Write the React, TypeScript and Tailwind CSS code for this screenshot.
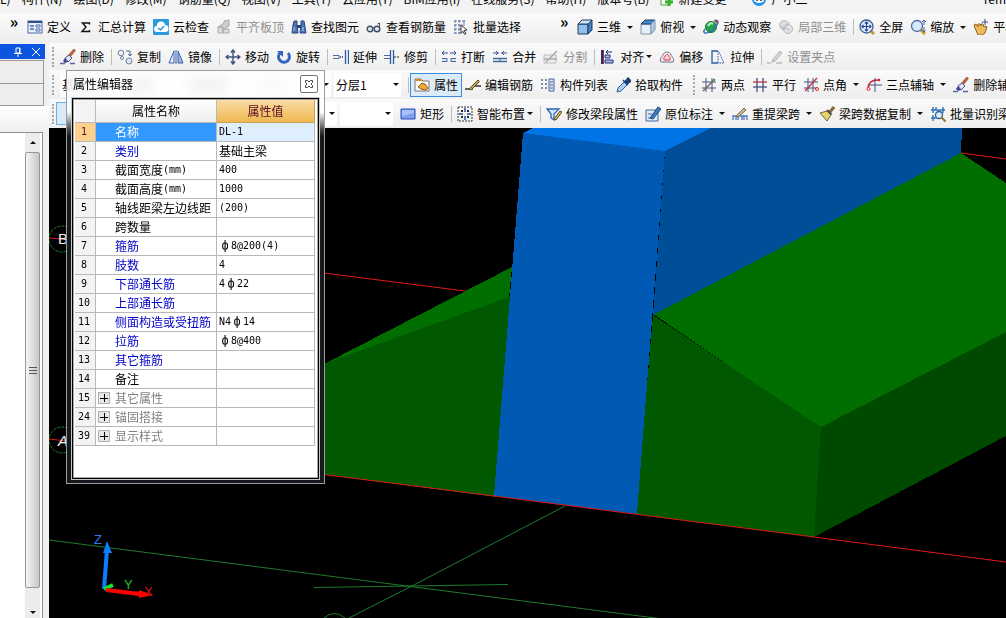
import type { ReactNode } from 'react';

const UI_FONT = "font-['Noto_Sans_CJK_SC',sans-serif]";

const menus = ['(L)', '构件(N)', '绘图(D)', '修改(M)', '钢筋量(Q)', '视图(V)', '工具(T)', '云应用(Y)', 'BIM应用(I)', '在线服务(S)', '帮助(H)', '版本号(B)'];

const magnifier = (
  <>
    <path d="m10 10 5 5" stroke="#c69632" strokeWidth="3" />
    <circle cx="7" cy="7" r="5.5" fill="#d7e8fa" stroke="#4c6a9c" strokeWidth="1.3" />
  </>
);

const icons: Record<string, ReactNode> = {
  define: (
    <>
      <rect x="1" y="2" width="14" height="12" fill="#e9f0fb" stroke="#4a6aa5" />
      <path d="M1 3h14" stroke="#2d4f8f" strokeWidth="2" />
      <path d="M3 7h4M3 10h4" stroke="#4a6aa5" strokeWidth="1.5" />
      <path d="M9 6h4v2H9zM9 10h4v2H9z" fill="#fff" stroke="#4a6aa5" />
    </>
  ),
  sigma: <path d="M11.500 5.500V4H4.500L8 8l-4 4.500h7.500V11" stroke="#111" strokeWidth="1.400" fill="none" />,
  cloud: (
    <>
      <rect width="16" height="16" rx="1" fill="#2b9be0" />
      <path d="M4 13a3 3 0 0 1 0-6 4 4 0 0 1 8-1 3.500 3.500 0 0 1 0 7z" fill="#fff" />
      <path d="m5 9 2.500 2L11 7" stroke="#2b9be0" strokeWidth="1.500" fill="none" />
    </>
  ),
  slab: (
    <>
      <path d="M2 8h5v6H2zM7 10h6v4H7z" fill="#dcdcdc" stroke="#aaa" />
      <path d="m2 8 6-4V2l5-1v6l-3 1v2H7V8z" fill="#cfcfcf" stroke="#aaa" />
    </>
  ),
  binoculars: (
    <>
      <path d="M3 2h3v4l1 8H1l1-8zM10 2h3l2 12H9l1-8z" fill="#4f74b8" stroke="#28447d" />
      <path d="M6 6h4v3H6z" fill="#28447d" />
      <path d="M3 8v4M12 8v4" stroke="#b9d0f2" />
    </>
  ),
  glasses: (
    <>
      <circle cx="4" cy="10" r="2.8" fill="#dde7f5" stroke="#444e60" strokeWidth="1.4" />
      <circle cx="11" cy="10" r="2.8" fill="#dde7f5" stroke="#444e60" strokeWidth="1.4" />
      <path d="M6.500 9q1-1 2 0M13.500 9V4l-2 1" stroke="#444e60" fill="none" />
    </>
  ),
  batch: (
    <>
      <path d="M2 1v14M6 1v14M1 2h12M1 6h9M1 10h7M1 14h7" stroke="#6478ac" strokeDasharray="3 1" />
      <path d="M11 1v6" stroke="#6478ac" />
      <path d="m8 6 6 5-3 .5 2 3-1.500.8-1.500-3-2 2z" fill="#fff" stroke="#333" />
    </>
  ),
  cube: (
    <>
      <path d="M1 5h10v10H1z" fill="#8fc0ea" stroke="#1f3b5c" />
      <path d="m1 5 4-4h10l-4 4z" fill="#d1e8fb" stroke="#1f3b5c" />
      <path d="m11 5 4-4v10l-4 4z" fill="#3f82bd" stroke="#1f3b5c" />
    </>
  ),
  topCube: (
    <>
      <path d="M1 5h10v10H1z" fill="#e7effa" stroke="#7f93ad" />
      <path d="m1 5 4-4h10l-4 4z" fill="#3a8dd2" stroke="#1f3b5c" />
      <path d="m11 5 4-4v10l-4 4z" fill="#b5cbe5" stroke="#7f93ad" />
    </>
  ),
  orbit: (
    <>
      <circle cx="8" cy="8" r="5.5" fill="#25a244" stroke="#137a2d" />
      <path d="M5 7q2-4 5-2" stroke="#b6f1c0" strokeWidth="2" fill="none" />
      <path d="M2 14c3 1 12-6 13-11 0-2-2-2-4-1M2 14c-2-1-1-3 0-4" stroke="#2f6ec0" strokeWidth="1.500" fill="none" />
      <circle cx="13.5" cy="2.500" r="1.500" fill="#c4402f" />
    </>
  ),
  localCube: (
    <>
      <circle cx="6" cy="6" r="4.5" fill="#dcdcdc" stroke="#bbb" />
      <circle cx="10" cy="10" r="4.5" fill="#e4e4e4" stroke="#b5b5b5" />
      <path d="M5 12 12 3M3 8l9 3" stroke="#bbb" />
    </>
  ),
  fullscreen: (
    <>
      {magnifier}
      <circle cx="7.5" cy="7.5" r="6.5" fill="#dce8fa" stroke="#3e5c94" strokeWidth="1.3" />
      <path d="M7.500 3v9M3 7.500h9M6 4.500 7.500 3 9 4.500M6 10.500 7.500 12 9 10.500M4.500 6 3 7.500 4.500 9M10.500 6 12 7.500 10.500 9" stroke="#2d4d94" strokeWidth="1.2" fill="none" />
    </>
  ),
  zoom: (
    <>
      {magnifier}
      <path d="M14 1v5M12 3l2-2 2 2M14 8v5M12.500 11.500 14 13l1.500-1.500" stroke="#3f5fa8" fill="none" />
    </>
  ),
  pan: (
    <>
      <path d="M2 9 1 6l2-1 2 3V5h2l1 2V5h2l1 3 2-1 1 1-2 6-3 2H5z" fill="#eeba5e" stroke="#8f6221" />
      <path d="M12 0v6M9 3h6" stroke="#334f8a" />
    </>
  ),
  brush: (
    <>
      <path d="m14 1.500-5 6" stroke="#b4623a" strokeWidth="3" strokeLinecap="round" />
      <path d="m9 6-4 3 3 4 4-4z" fill="#dfe3f6" stroke="#4b5596" />
      <path d="m5 9-2 3 2 2 3-1z" fill="#3d468c" />
      <path d="M0 14.500h5M10 14.500h5" stroke="#5a66a8" strokeWidth="1.500" />
    </>
  ),
  copy: (
    <>
      <circle cx="4" cy="4" r="2.8" fill="#eef3fa" stroke="#6f7f9c" />
      <circle cx="5" cy="9" r="1.5" fill="#fff" stroke="#6f7f9c" />
      <circle cx="12" cy="12" r="3" fill="#dce7f5" stroke="#6f7f9c" />
      <path d="M9 2h4v4M11 5l2 2 2-2" stroke="#596a8b" fill="none" />
    </>
  ),
  mirror: (
    <>
      <path d="M6 2v12H1z" fill="#e8f0fb" stroke="#3a5fa8" />
      <path d="M10 2v12h5z" fill="#9db9e4" stroke="#3a5fa8" />
      <path d="M8 1v14" stroke="#3a5fa8" />
    </>
  ),
  move: <path d="M8 1v14M1 8h14M6 3.500 8 1l2 2.500M6 12.500 8 15l2-2.500M3.500 6 1 8l2.500 2M12.500 6 15 8l-2.500 2" stroke="#3d5580" strokeWidth="1.4" fill="none" />,
  rotate: (
    <>
      <path d="M4.500 3.500A5.500 5.500 0 1 0 12 4" stroke="#3567c0" strokeWidth="3" fill="none" />
      <path d="M1 2h6v6z" fill="#3567c0" />
    </>
  ),
  extend: (
    <>
      <path d="M12.500 1v14M15.500 1v14" stroke="#2d5aa8" strokeWidth="1.3" />
      <path d="M0 6.500h6v3H0" stroke="#4a6aa5" />
      <path d="M7 8h4" stroke="#222" strokeWidth="1.5" strokeDasharray="1 1" />
    </>
  ),
  trim: (
    <>
      <path d="M6.500 1v14M9.500 1v14" stroke="#2d5aa8" strokeWidth="1.3" />
      <path d="M0 6.500h6M0 9.500h6" stroke="#4a6aa5" />
      <path d="M10 8h6" stroke="#222" strokeDasharray="2 1" />
    </>
  ),
  breakLine: (
    <>
      <path d="M1 4h6M9 4h6M3 2 1 4l2 2M13 2l2 2-2 2" stroke="#3b4f9a" fill="none" />
      <path d="M1 9.500h5v3H1M15 9.500h-5v3h5" stroke="#3f6b9a" fill="#dbe7f4" />
    </>
  ),
  merge: (
    <>
      <path d="M1 4h6M9 4h6M4 2l2 2-2 2M12 2l-2 2 2 2" stroke="#3b4f9a" fill="none" />
      <path d="M1 9.500h14M1 12.500h14" stroke="#3f6b9a" strokeWidth="1.3" />
      <path d="M8 9.500v3" stroke="#3f6b9a" />
    </>
  ),
  split: (
    <>
      <path d="M1 6h12v8H1z" fill="#eee" stroke="#bbb" />
      <path d="m3 13 11-11M1 10h13" stroke="#aaa" strokeWidth="1.5" />
    </>
  ),
  align: (
    <>
      <path d="M3.500 1v14" stroke="#c02a2a" />
      <path d="M2 1v14" stroke="#1d2f78" strokeWidth="2" />
      <path d="M5 6h5v3H5zM5 11h8v3H5z" fill="#a9bce8" stroke="#1d2f78" />
      <path d="M6 3h6M8 1 6 3l2 2" stroke="#1d2f78" />
    </>
  ),
  offset: (
    <>
      <path d="M2 13c-2-3 1-5 2-7 1-4 7-4 8 0 1 2 4 4 2 7z" fill="#fbe9e9" stroke="#66708c" />
      <path d="M5 11c-1-2 1-3 1-4 1-2 3-2 4 0 0 1 2 2 1 4z" fill="#f3d3d6" stroke="#c73f50" />
    </>
  ),
  stretch: (
    <>
      <path d="M8 2H2v12h6" stroke="#2d5aa8" strokeWidth="1.3" fill="none" />
      <path d="M8 2v12M9 3l5 11H8" stroke="#2d5aa8" strokeDasharray="1.500 1" fill="none" />
    </>
  ),
  grip: (
    <>
      <path d="m6 10 7-8 2 2-7 8-3 1z" fill="#d8d8d8" stroke="#b0b0b0" />
      <path d="M0 14h4M9 14h6" stroke="#bbb" strokeWidth="1.5" />
    </>
  ),
  property: (
    <>
      <path d="M1 2h6l2 2h6v10H1z" fill="#fff" stroke="#7a7566" />
      <path d="M1 3h7" stroke="#d98e2b" strokeWidth="2" />
      <path d="m4 10 4-4 3 1 3 4-2 2-5-1z" fill="#f0a93e" stroke="#8c5a17" />
    </>
  ),
  editRebar: (
    <>
      <path d="M0 12h8M10 9h6" stroke="#333" strokeWidth="1.3" />
      <path d="m4 12 9-9 1.500 1.500L6 13z" fill="#c8a555" stroke="#5a4a28" />
    </>
  ),
  list: (
    <>
      <path d="M1 3h2M1 7h2M1 11h2M5 3h2M5 7h2M5 11h2" stroke="#5b6c95" strokeWidth="1.5" />
      <path d="M9 2h5v12H9z" fill="#dfe7f6" stroke="#45619c" />
      <path d="M10 5h3M10 8h3M10 11h3" stroke="#45619c" />
    </>
  ),
  picker: (
    <>
      <path d="m2 15 1-4 6-6 3 3-6 6z" fill="#a8d1f2" stroke="#2d5f96" />
      <path d="m8 3 5 5M10 5l3-4 3 3-4 3z" fill="#1d3f78" stroke="#1d3f78" strokeWidth="1.5" />
    </>
  ),
  twoPoint: (
    <>
      <path d="M5 1v14M11 1v14M1 5h14M1 11h14" stroke="#43547c" />
      <path d="M2 14 14 2" stroke="#7c5a5a" strokeWidth="1.2" />
      <path d="M12 2h2v2h-2z" fill="#3a9a3a" />
    </>
  ),
  parallel: (
    <>
      <path d="M5 1v14M11 1v14" stroke="#43547c" strokeWidth="1.3" />
      <path d="M1 5h14" stroke="#c0304a" strokeWidth="1.3" />
      <path d="M1 10h14" stroke="#43547c" strokeWidth="1.3" />
    </>
  ),
  pointAngle: (
    <>
      <path d="M5 1v14M10 1v14M1 5h14M1 11h12" stroke="#43547c" />
      <path d="M2 14 14 1" stroke="#c0304a" strokeWidth="1.3" />
      <circle cx="14" cy="12" r="1.5" fill="none" stroke="#d22" />
    </>
  ),
  threePoint: (
    <>
      <path d="M2 12C2 6 5 3 12 3" stroke="#d0253a" strokeWidth="1.5" fill="none" />
      <path d="M9 1v14M3 8h13" stroke="#43547c" />
      <circle cx="2.5" cy="12" r="1.5" fill="#fff" stroke="#d0253a" />
      <circle cx="13" cy="3" r="1.3" fill="#d0253a" />
    </>
  ),
  rect: (
    <>
      <path d="M1 3h14v10H1z" fill="#7ea2ef" stroke="#2448b8" />
      <path d="M2 4h12v3L2 10z" fill="#a9c1f7" />
    </>
  ),
  smart: (
    <>
      <rect x="1" y="1" width="14" height="14" fill="none" stroke="#333" strokeDasharray="2 1" />
      <path d="M8 2v4M8 10v4M2 8h4M10 8h4" stroke="#2b4f96" strokeWidth="1.5" />
      <path d="M4 4h2v2H4zM10 4h2v2h-2zM4 10h2v2H4zM10 10h2v2h-2z" fill="#223" />
    </>
  ),
  editSpan: (
    <>
      <path d="M1 3h12L8 8v6l-3-2V8z" fill="#cfe3f9" stroke="#2f68b4" strokeWidth="1.3" />
      <path d="m8 13 6-8 2 1-6 8z" fill="#d9b568" stroke="#5b4a23" />
    </>
  ),
  annotate: (
    <>
      <path d="M1 4h12v11H1z" fill="#dce8f8" stroke="#456ba5" />
      <path d="M3 8h4M3 12h3" stroke="#456ba5" />
      <path d="m5 12 8-11 3 2-8 10z" fill="#4277ba" stroke="#234a80" />
    </>
  ),
  respan: (
    <>
      <path d="M1 14v-4h3v4M6 14v-4h4v4M12 14v-4h3v4M1 10h14" stroke="#4b79b8" fill="none" strokeWidth="1.3" />
      <path d="m4 10 8-8 2 2-8 7z" fill="#cabd98" stroke="#776a4c" />
    </>
  ),
  spanCopy: (
    <>
      <path d="m15 1-5 6" stroke="#8b6b38" strokeWidth="3" />
      <path d="m1 7 7-2 4 4-4 6z" fill="#e5d36d" stroke="#6e6638" />
      <path d="m8 4 4.500 4.500" stroke="#3f4f44" strokeWidth="2" />
    </>
  ),
  identify: (
    <>
      <path d="M1 4h14M3 1v6M13 1v6M6 1v3M1 12h6M3 9v6" stroke="#3172b4" strokeWidth="1.4" />
      <circle cx="9" cy="9" r="3.5" fill="#dcecfb" stroke="#2f5e94" strokeWidth="1.3" />
      <path d="m11.500 11.500 4 4" stroke="#a3692a" strokeWidth="2" />
    </>
  ),
};

function Icon({ name }: { name: string }) {
  return (
    <svg viewBox="0 0 16 16" className="h-4 w-4 shrink-0" fill="none" aria-hidden="true">
      {icons[name]}
    </svg>
  );
}

function Caret() {
  return (
    <svg viewBox="0 0 6 3" className="h-[3px] w-[6px]" aria-hidden="true">
      <path d="M0 0h6L3 3z" fill="#111" />
    </svg>
  );
}

type ToolProps = { icon: string; label: string; menu?: boolean; tight?: boolean; disabled?: boolean };

function Tool({ icon, label, menu, tight, disabled }: ToolProps) {
  return (
    <button type="button" disabled={disabled} className={`flex h-5 shrink-0 items-center whitespace-nowrap ${disabled ? 'text-[#8f8f8f]' : 'text-black'}`}>
      <Icon name={icon} />
      <span className="ml-1">{label}</span>
      {menu && (
        <span className={`flex justify-end ${tight ? 'w-2' : 'w-3'}`}>
          <Caret />
        </span>
      )}
    </button>
  );
}

function Separator() {
  return <span className="-mr-0.5 h-4 w-px shrink-0 bg-[#bdbdbd]" />;
}

function Grip() {
  return <span className="-mr-px h-5 w-0.5 shrink-0 border-l-2 border-dotted border-[#a8a8a8]" />;
}

function Combo({ label, value, className }: { label: string; value: string; className: string }) {
  return (
    <label className={`relative flex h-6 shrink-0 items-center bg-white ${className}`}>
      <select aria-label={label} className="h-full w-full appearance-none bg-transparent pl-0.5 text-xs outline-none">
        <option>{value}</option>
      </select>
      <span className="pointer-events-none absolute right-0.5">
        <Caret />
      </span>
    </label>
  );
}

function ToolRow({ children }: { children: ReactNode }) {
  return (
    <div className="flex items-center gap-[7px] overflow-hidden bg-linear-to-b from-[#fafafa] to-[#eeeeee] pl-[3px]">
      {children}
    </div>
  );
}

function MenuBar() {
  return (
    <nav className="-mt-4 flex h-[29px] shrink-0 items-center gap-[11px] overflow-hidden whitespace-nowrap bg-[#f3f3f3]">
      {menus.map((item, i) => (
        <button key={item} type="button" className={i === 0 ? '-ml-1' : ''}>
          {item}
        </button>
      ))}
      <button type="button" className="flex items-center gap-1">
        <svg viewBox="0 0 14 16" className="h-4 w-[14px]" aria-hidden="true">
          <path d="M1 1h9v13H1z" fill="#fff" stroke="#4aa33e" />
          <path d="M9 7v8M5 11h8" stroke="#35b32b" strokeWidth="3" />
        </svg>
        新建变更
        <span className="ml-1">
          <Caret />
        </span>
      </button>
      <button type="button" className="flex items-center gap-1">
        <svg viewBox="0 0 16 16" className="h-4 w-4" aria-hidden="true">
          <circle cx="8" cy="8" r="7" fill="#2292e6" />
          <ellipse cx="8" cy="9" rx="5" ry="3" fill="#fff" />
          <circle cx="6" cy="9" r="1" fill="#123" />
          <circle cx="10" cy="9" r="1" fill="#123" />
        </svg>
        广小二
      </button>
      <span className="ml-auto">Tem</span>
    </nav>
  );
}

function MainToolbar() {
  return (
    <div className="flex h-[30px] shrink-0 items-center gap-[7px] overflow-hidden bg-linear-to-b from-[#fbfbfb] to-[#eeeeee] pb-0.5 pl-2">
      <button type="button" aria-label="更多" className="w-3 shrink-0 pb-3 text-base leading-4 font-bold">»</button>
      <Tool icon="define" label="定义" />
      <Tool icon="sigma" label="汇总计算" />
      <Tool icon="cloud" label="云检查" />
      <Tool icon="slab" label="平齐板顶" disabled />
      <Tool icon="binoculars" label="查找图元" />
      <Tool icon="glasses" label="查看钢筋量" />
      <Tool icon="batch" label="批量选择" />
      <button type="button" aria-label="更多视图" className="ml-[30px] w-3 shrink-0 pb-3 text-base leading-4 font-bold">»</button>
      <Tool icon="cube" label="三维" menu />
      <Tool icon="topCube" label="俯视" menu />
      <Tool icon="orbit" label="动态观察" />
      <Tool icon="localCube" label="局部三维" disabled />
      <Separator />
      <Tool icon="fullscreen" label="全屏" />
      <Tool icon="zoom" label="缩放" menu />
      <Tool icon="pan" label="平移" />
    </div>
  );
}

function EditToolbars() {
  return (
    <div className="grid shrink-0 grid-rows-[27px_29px_29px]">
      <ToolRow>
        <Grip />
        <Tool icon="brush" label="删除" />
        <Separator />
        <Tool icon="copy" label="复制" />
        <Tool icon="mirror" label="镜像" />
        <Separator />
        <Tool icon="move" label="移动" />
        <Tool icon="rotate" label="旋转" />
        <Separator />
        <Tool icon="extend" label="延伸" />
        <Tool icon="trim" label="修剪" />
        <Separator />
        <Tool icon="breakLine" label="打断" />
        <Tool icon="merge" label="合并" />
        <Tool icon="split" label="分割" disabled />
        <Separator />
        <Tool icon="align" label="对齐" menu tight />
        <Tool icon="offset" label="偏移" />
        <Tool icon="stretch" label="拉伸" />
        <Separator />
        <Tool icon="grip" label="设置夹点" disabled />
      </ToolRow>
      <ToolRow>
        <Grip />
        <div className="flex shrink-0 gap-[3px]">
          <Combo label="楼层" value="基础层" className="w-[65px]" />
          <Combo label="构件类型" value="基础" className="w-[59px]" />
          <Combo label="构件" value="基础梁" className="w-[70px]" />
          <Combo label="构件名称" value="DL-1" className="w-[68px]" />
          <Combo label="分层" value="分层1" className="w-[67px]" />
        </div>
        <Separator />
        <div className="-mx-1 flex h-6 shrink-0 items-center border border-[#3c8ddb] bg-[#dcebfa] px-[3px]">
          <Tool icon="property" label="属性" />
        </div>
        <Tool icon="editRebar" label="编辑钢筋" />
        <Tool icon="list" label="构件列表" />
        <Tool icon="picker" label="拾取构件" />
        <span className="ml-[3px] flex">
          <Grip />
        </span>
        <Tool icon="twoPoint" label="两点" />
        <Tool icon="parallel" label="平行" />
        <Tool icon="pointAngle" label="点角" menu />
        <Tool icon="threePoint" label="三点辅轴" menu />
        <Tool icon="brush" label="删除辅轴" />
      </ToolRow>
      <ToolRow>
        <Grip />
        <button type="button" aria-label="选择" className="-ml-1 flex h-[23px] w-11 shrink-0 items-center border border-[#6cb0e8] bg-[#d9ebfa]" />
        <Combo label="绘制方式" value="" className="-mr-1 w-[230px] bg-transparent" />
        <Combo label="绘制参数" value="" className="w-[53px]" />
        <Tool icon="rect" label="矩形" />
        <Separator />
        <Tool icon="smart" label="智能布置" menu tight />
        <Separator />
        <Tool icon="editSpan" label="修改梁段属性" />
        <Tool icon="annotate" label="原位标注" menu />
        <Tool icon="respan" label="重提梁跨" menu />
        <Tool icon="spanCopy" label="梁跨数据复制" menu />
        <Tool icon="identify" label="批量识别梁" />
      </ToolRow>
    </div>
  );
}

function SidePanel() {
  return (
    <aside className="flex w-[49px] shrink-0 flex-col bg-[#f0f0f0] pt-px">
      <div className="mr-1 flex h-[15px] shrink-0 items-center justify-end gap-2 bg-[#0b55e0] pr-1">
        <button type="button" aria-label="固定">
          <svg viewBox="0 0 10 10" className="h-[10px] w-[10px]" fill="none" stroke="#fff" aria-hidden="true">
            <path d="M3 1h4v5H3zM1 6.500h8M5 7v3M6.500 1v5" />
          </svg>
        </button>
        <button type="button" aria-label="关闭面板">
          <svg viewBox="0 0 10 10" className="h-[10px] w-[10px]" stroke="#fff" aria-hidden="true">
            <path d="m1 1 8 8M9 1 1 9" />
          </svg>
        </button>
      </div>
      <div className="mt-px mr-[5px] h-[23px] shrink-0 border-t border-r border-[#9a9a9a] bg-[#ededed]" />
      <div className="mr-[5px] h-[23px] shrink-0 border-y border-r border-[#9a9a9a] bg-[#ededed]" />
      <div className="h-[26px] shrink-0 bg-linear-to-b from-white to-[#f0f0f0]" />
      <div className="mr-1.5 flex min-h-0 flex-1 justify-end border-t border-r border-[#8e8e8e] bg-white pr-0.5">
        <div className="flex w-[15px] flex-col items-center bg-[#ececec]">
          <div className="flex h-[19px] items-center">
            <span className="rotate-180">
              <Caret />
            </span>
          </div>
          <div className="flex w-full flex-1 flex-col items-center justify-center gap-px rounded-xs border border-[#969696] bg-linear-to-r from-[#f6f6f6] to-[#c6c6c9]">
            <span className="h-px w-2 bg-[#555]" />
            <span className="mt-px h-px w-2 bg-[#555]" />
            <span className="mt-px h-px w-2 bg-[#555]" />
          </div>
          <div className="flex h-[30px] items-end pb-1">
            <Caret />
          </div>
        </div>
      </div>
    </aside>
  );
}

function Scene() {
  return (
    <svg viewBox="49 128 957 490" preserveAspectRatio="xMinYMin slice" className="block min-h-0 w-full flex-1 bg-black" role="img" aria-label="三维视图">
      <g fill="none" stroke="#1f7a2c">
        <path d="M49 540 663 619M565 506 410 587 349 618M314 587.500 410 586 508 584.500" />
        <path d="M324 618q10-9 21 0" />
        <circle cx="62" cy="239" r="13" strokeDasharray="3 1" />
        <circle cx="62" cy="440" r="13" strokeDasharray="3 1" />
      </g>
      <path d="M300 270 512 297M961 153 1006 159" stroke="#e01818" fill="none" />
      <g shapeRendering="crispEdges">
        <path d="M280 388 326 363 512 267 509 298 326 364z" fill="#006f00" />
        <path d="M280 380 326 363 509 297 512 290 496 497 280 469z" fill="#005800" />
        <path d="M653 314 961 153 1006 183V332L821 428z" fill="#006f00" />
        <path d="M653 315 821 427 814 537 636 514z" fill="#005800" />
        <path d="M821 427 1006 332V436L814 537z" fill="#004a00" />
        <path d="M523 133 533 128H711L665 151z" fill="#0073e6" />
        <path d="M665 151 711 128H962L961 153 653 315z" fill="#004e98" />
        <path d="M523 133 665 151 637 514 494 496z" fill="#005ab4" />
      </g>
      <path d="M280 469 494 496 814 537 1006 562" stroke="#e01818" fill="none" />
      <path d="M49 238 75 240M49 439 75 442" stroke="#e01818" />
      <g className="font-['Liberation_Sans',sans-serif]" fontSize="15" fill="#f2f2f2">
        <text x="58" y="244">B</text>
        <text x="58" y="446" fontStyle="italic">A</text>
      </g>
      <path d="M104 589 107 550" stroke="#0b7dff" strokeWidth="4" />
      <path d="m107 541 5 12h-9z" fill="#0b7dff" />
      <path d="m104 589 9-4" stroke="#13e22b" strokeWidth="4" />
      <path d="M106 590 140 594" stroke="#f00" strokeWidth="4" />
      <path d="m153 595-14-5v8z" fill="#f00" />
      <g className="font-['Liberation_Sans',sans-serif]" fontSize="13">
        <text x="94" y="544" fill="#2b7bf0">Z</text>
        <text x="124" y="589" fill="#22c52f">Y</text>
        <text x="144" y="596" fill="#d01515">X</text>
      </g>
    </svg>
  );
}

type Row = { no: number; name: string; unit?: string; value?: string; tone?: 'blue' | 'group' | 'selected' };

const rows: Row[] = [
  { no: 1, name: '名称', value: 'DL-1', tone: 'selected' },
  { no: 2, name: '类别', value: '基础主梁', tone: 'blue' },
  { no: 3, name: '截面宽度', unit: '(mm)', value: '400' },
  { no: 4, name: '截面高度', unit: '(mm)', value: '1000' },
  { no: 5, name: '轴线距梁左边线距', value: '(200)' },
  { no: 6, name: '跨数量' },
  { no: 7, name: '箍筋', value: 'ф8@200(4)', tone: 'blue' },
  { no: 8, name: '肢数', value: '4', tone: 'blue' },
  { no: 9, name: '下部通长筋', value: '4ф22', tone: 'blue' },
  { no: 10, name: '上部通长筋', tone: 'blue' },
  { no: 11, name: '侧面构造或受扭筋', value: 'N4ф14', tone: 'blue' },
  { no: 12, name: '拉筋', value: 'ф8@400', tone: 'blue' },
  { no: 13, name: '其它箍筋', tone: 'blue' },
  { no: 14, name: '备注' },
  { no: 15, name: '其它属性', tone: 'group' },
  { no: 24, name: '锚固搭接', tone: 'group' },
  { no: 39, name: '显示样式', tone: 'group' },
];

const toneClass = {
  blue: 'text-[#0000c8]',
  group: 'text-[#808080]',
  selected: 'bg-[#3399ff] text-white',
};

function Value({ text }: { text: string }) {
  if (text === '基础主梁') return <>{text}</>;
  return (
    <span className="font-['DejaVu_Sans_Mono',monospace] text-[10px]">
      {text.split(/(ф)/).map((part, i) =>
        part === 'ф' ? (
          <span key={i} className="inline-block w-3 text-center text-xs leading-3">{part}</span>
        ) : (
          part
        ),
      )}
    </span>
  );
}

function PropertyTable() {
  return (
    <table className="w-full table-fixed border-separate border-spacing-0">
      <colgroup>
        <col className="w-[21px]" />
        <col className="w-[121px]" />
        <col />
      </colgroup>
      <thead>
        <tr className="h-[23px]">
          <th className="border-r border-b border-[#b9b9b9] bg-[#f4f4f4]" aria-label="序号" />
          <th className="border-r border-b border-[#b9b9b9] bg-linear-to-b from-white to-[#eeeeee] p-0 font-normal">属性名称</th>
          <th className="border-r border-b border-[#c9a25a] bg-linear-to-b from-[#fbdca4] to-[#eeb750] p-0 font-normal text-[#5c0a1e]">属性值</th>
        </tr>
      </thead>
      <tbody>
        {rows.map((row) => (
          <tr key={row.no}>
            <td className={`border-r border-b border-[#b9b9b9] p-0 ${row.no === 1 ? 'bg-[#fbcf8c] text-[#5c0a1e]' : 'bg-[#f3f3f3]'}`}>
              <div className="flex h-[18px] items-center justify-center pr-0.5 font-['DejaVu_Sans_Mono',monospace] text-[10px]">{row.no}</div>
            </td>
            <td className={`border-r border-b border-[#b9b9b9] p-0 whitespace-nowrap ${row.tone ? toneClass[row.tone] : ''}`}>
              <div className="flex h-[18px] items-center">
                <span className="flex w-[19px] shrink-0 pl-0.5">
                  {row.tone === 'group' && (
                    <button type="button" aria-label={`展开${row.name}`} className="h-3 w-3 border border-[#b0b0b0] bg-[#e6e6e6]">
                      <svg viewBox="0 0 10 10" className="block h-[10px] w-[10px]" stroke="#000" aria-hidden="true">
                        <path d="M1 5.500h8M5.500 1v8" />
                      </svg>
                    </button>
                  )}
                </span>
                {row.name}
                {row.unit && <span className="font-['DejaVu_Sans_Mono',monospace] text-[10px]">{row.unit}</span>}
              </div>
            </td>
            <td className={`border-r border-b border-[#b9b9b9] p-0 whitespace-nowrap ${row.tone === 'selected' ? 'bg-[#dfeefc]' : ''}`}>
              <div className="flex h-[18px] items-center pl-0.5">{row.value && <Value text={row.value} />}</div>
            </td>
          </tr>
        ))}
      </tbody>
    </table>
  );
}

function PropertyDialog() {
  return (
    <section aria-label="属性编辑器" className="absolute top-[70px] left-[66px] w-[259px] border border-[#9c9c9c] bg-linear-to-b from-white/80 from-10% to-[#15181c] to-16% px-1 pb-[3px] backdrop-blur-sm">
      <header className="flex h-[26px] items-center justify-between pr-0.5 pl-0.5">
        <h2>属性编辑器</h2>
        <button type="button" aria-label="关闭" className="flex h-[18px] w-[18px] items-center justify-center rounded-xs border border-[#777] bg-white">
          <svg viewBox="0 0 8 8" className="h-2 w-2" fill="#fff" stroke="#444" aria-hidden="true">
            <path d="M.5.5h2L4 2 5.500.5h2v2L6 4l1.500 1.500v2h-2L4 6 2.500 7.500h-2v-2L2 4 .5 2.500z" />
          </svg>
        </button>
      </header>
      <div className="border border-[#c8c8c8] bg-black p-px">
        <div className="border border-[#a6a6a6] bg-white pr-0.5 pb-[31px] pl-px">
          <PropertyTable />
        </div>
      </div>
    </section>
  );
}

export default function App() {
  return (
    <main className={`relative flex h-screen flex-col overflow-hidden bg-[#f0f0f0] text-xs text-black ${UI_FONT}`}>
      <MenuBar />
      <MainToolbar />
      <div className="flex min-h-0 flex-1">
        <SidePanel />
        <div className="flex min-w-0 flex-1 flex-col">
          <EditToolbars />
          <Scene />
        </div>
      </div>
      <PropertyDialog />
    </main>
  );
}
